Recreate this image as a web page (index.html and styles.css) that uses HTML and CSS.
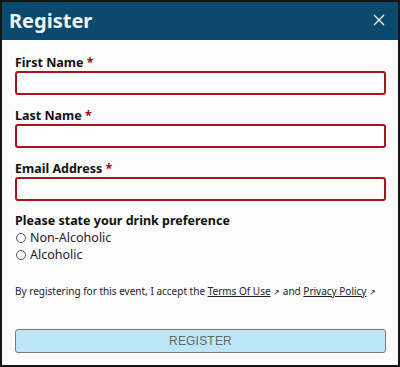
FILE: index.html
```html
<!DOCTYPE html>
<html>
<head>
<meta charset="utf-8">
<link rel="stylesheet" href="styles.css">
</head>
<body>
<div class="dialog">
  <div class="header">
    <h1 class="title">Register</h1>
    <svg class="close" width="12" height="12" viewBox="0 0 12 12"><path d="M1 1 L11 11 M11 1 L1 11" stroke="#fff" stroke-width="1.2" fill="none"/></svg>
  </div>
  <div class="content">
    <div class="field">
      <label class="label">First Name <span class="req">*</span></label>
      <input class="input" type="text">
    </div>
    <div class="field">
      <label class="label">Last Name <span class="req">*</span></label>
      <input class="input" type="text">
    </div>
    <div class="field">
      <label class="label">Email Address <span class="req">*</span></label>
      <input class="input" type="text">
    </div>
    <div class="group">
      <div class="label">Please state your drink preference</div>
      <label class="radio"><span class="circle"></span>Non-Alcoholic</label>
      <label class="radio"><span class="circle"></span>Alcoholic</label>
    </div>
    <p class="terms">By registering for this event, I accept the <a class="link">Terms Of Use</a> <span class="ext">&#x2197;</span> and <a class="link">Privacy Policy</a> <span class="ext">&#x2197;</span></p>
    <button class="btn">REGISTER</button>
  </div>
</div>
</body>
</html>
```
FILE: styles.css
```css
html, body { margin: 0; padding: 0; }
body { width: 400px; height: 367px; font-family: "Noto Sans", "Open Sans", sans-serif; background: #fff; }
.dialog { box-sizing: border-box; width: 400px; height: 367px; border: 2px solid #151515; background: #fcfcfc; display: flex; flex-direction: column; }
.header { height: 38px; background: #0b4a6e; display: flex; align-items: center; justify-content: space-between; padding: 0 13px 0 7px; flex: none; }
.title { margin: 0; color: #f2f2f2; font-size: 20px; font-weight: 700; line-height: 24px; }
.close { display: block; margin-top: -2px; }
.content { padding: 15px 12px 0 13px; display: flex; flex-direction: column; }
.field { display: flex; flex-direction: column; margin-bottom: 13px; }
.label { font-size: 12.5px; font-weight: 700; color: #111; line-height: 16px; }
.req { color: #b00020; }
.input { box-sizing: border-box; height: 24px; width: 100%; margin: 0; border: 2px solid #a8141c; border-radius: 3px; background: #fff; outline: none; }
.group { display: flex; flex-direction: column; margin-top: -1px; }
.radio { display: flex; align-items: center; font-size: 12.5px; color: #222; line-height: 17px; }
.circle { box-sizing: border-box; width: 10px; height: 10px; border: 1px solid #555; border-radius: 50%; margin: 0 4px 0 1px; background: #fff; }
.terms { margin: 21px 0 0 0; font-size: 10px; color: #222; line-height: 14px; }
.link { color: #222; text-decoration: underline; }
.ext { font-size: 8px; }
.btn { margin-top: 30px; height: 24px; width: 100%; box-sizing: border-box; background: #bde6f8; border: 1px solid #7a7a7a; border-radius: 3px; color: #666; font-family: "Liberation Sans", Arial, sans-serif; font-size: 12px; letter-spacing: 0.2px; }
```
